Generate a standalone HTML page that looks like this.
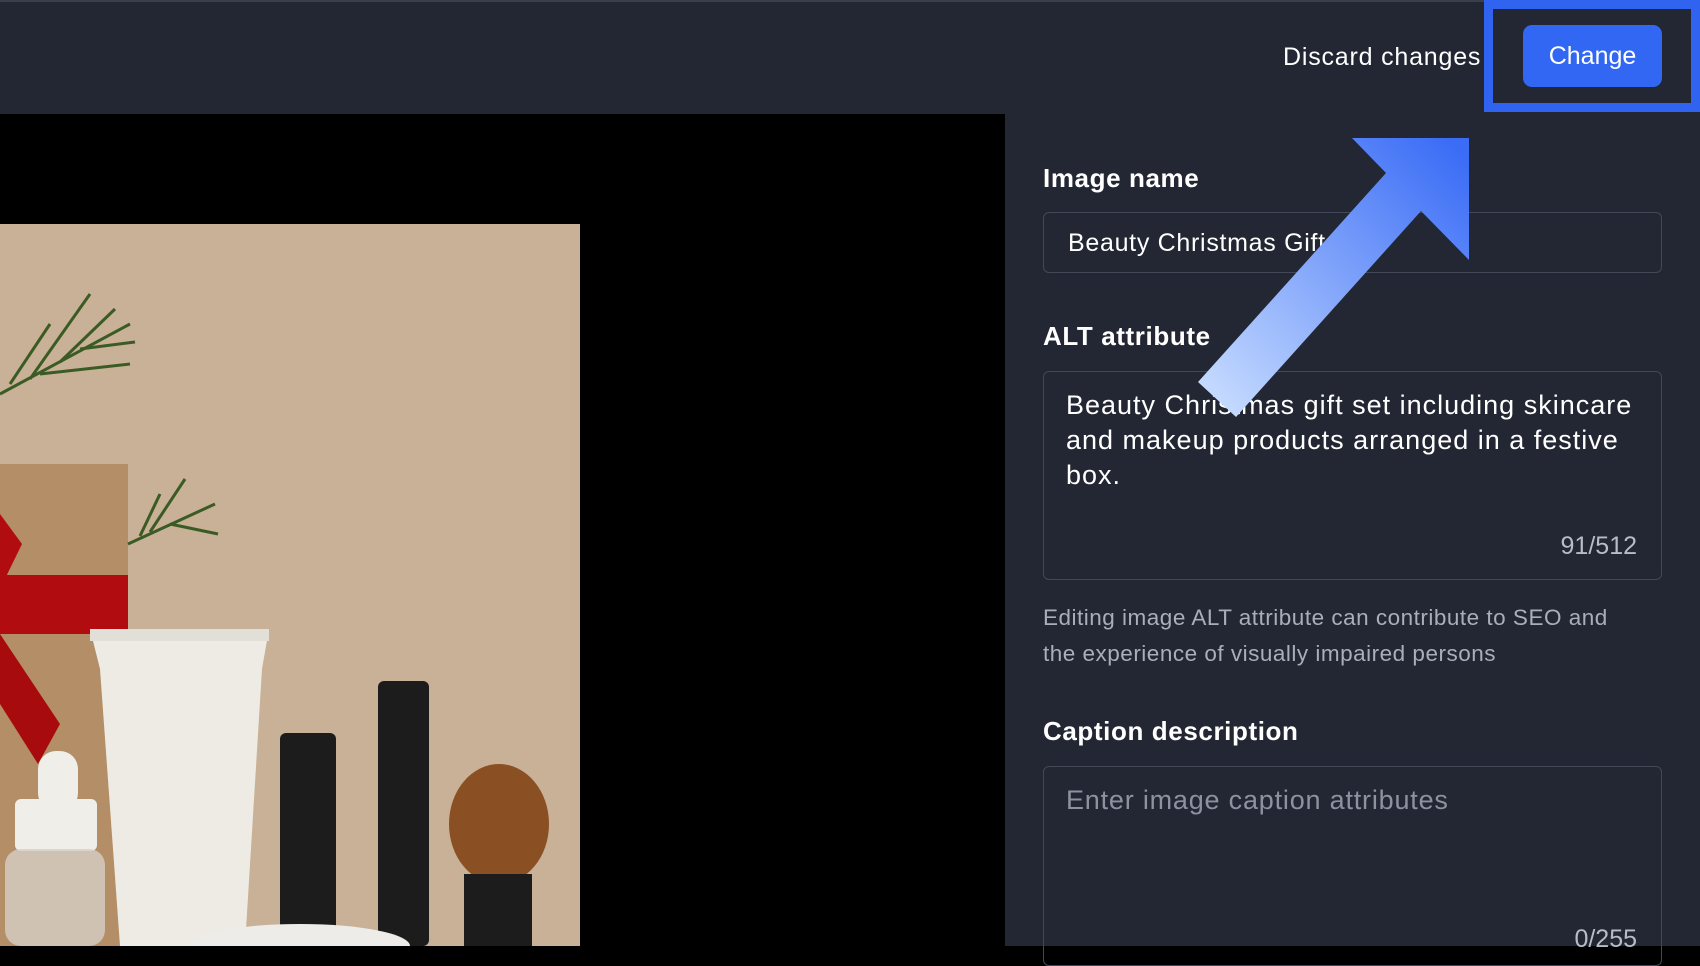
<!DOCTYPE html>
<html><head><meta charset="utf-8"><style>
*{margin:0;padding:0;box-sizing:border-box}
body{width:1700px;height:946px;overflow:hidden;background:#000;font-family:"Liberation Sans",sans-serif;position:relative}
.hdr{position:absolute;left:0;top:0;width:1700px;height:114px;background:#232733;border-top:2px solid #3a3f4c}
.abs{position:absolute}
.panel{position:absolute;left:1005px;top:114px;width:695px;height:832px;background:#232733}
.lbl{position:absolute;left:1043px;color:#fff;font-weight:bold;font-size:26px;letter-spacing:0.6px}
.box{position:absolute;left:1043px;width:619px;border:1px solid #424857;border-radius:6px}
</style></head><body>
<div class="hdr"></div>
<div class="abs" style="left:1283px;top:43px;color:#fff;font-size:25px;letter-spacing:0.8px">Discard changes</div>
<div class="abs" style="left:1484px;top:0;width:216px;height:112px;border:9px solid #2f63f0"></div>
<div class="abs" style="left:1523px;top:25px;width:139px;height:62px;background:#3167f3;border-radius:9px;color:#fff;font-size:25px;text-align:center;line-height:62px">Change</div>

<svg class="abs" style="left:0;top:224px" width="580" height="722" viewBox="0 0 580 722">
<rect width="580" height="722" fill="#c8b197"/>
<rect x="0" y="240" width="128" height="482" fill="#b48e66"/>
<rect x="0" y="351" width="128" height="59" fill="#b10d10"/>
<polygon points="0,290 22,320 0,365" fill="#b10d10"/>
<polygon points="0,410 60,500 38,540 0,480" fill="#a80b0d"/>
<g stroke="#3b5b25" stroke-width="3">
<line x1="0" y1="170" x2="130" y2="100"/><line x1="30" y1="155" x2="90" y2="70"/><line x1="60" y1="138" x2="115" y2="85"/><line x1="40" y1="150" x2="130" y2="140"/><line x1="80" y1="125" x2="135" y2="118"/><line x1="10" y1="160" x2="50" y2="100"/>
<line x1="128" y1="320" x2="215" y2="280"/><line x1="150" y1="308" x2="185" y2="255"/><line x1="170" y1="300" x2="218" y2="310"/><line x1="140" y1="312" x2="160" y2="270"/>
</g>
<polygon points="90,405 269,405 262,445 245,722 120,722 100,445" fill="#eeebe4"/>
<rect x="90" y="405" width="179" height="12" fill="#e2dfd8"/>
<rect x="280" y="509" width="56" height="213" rx="6" fill="#1c1c1c"/>
<rect x="378" y="457" width="51" height="265" rx="6" fill="#1c1c1c"/>
<ellipse cx="499" cy="600" rx="50" ry="60" fill="#8a4f22"/>
<rect x="464" y="650" width="68" height="72" fill="#1c1c1c"/>
<rect x="38" y="527" width="40" height="60" rx="18" fill="#f0eee9"/>
<rect x="15" y="575" width="82" height="52" rx="6" fill="#f0eee9"/>
<rect x="5" y="625" width="100" height="97" rx="16" fill="#d6d0c6" opacity=".8"/>
<ellipse cx="300" cy="722" rx="110" ry="22" fill="#eeece8"/>
</svg>

<div class="panel"></div>
<div class="lbl" style="top:163px">Image name</div>
<div class="box" style="top:212px;height:61px"></div>
<div class="abs" style="left:1068px;top:229px;color:#fff;font-size:25px;letter-spacing:0.7px">Beauty Christmas Gift</div>
<div class="lbl" style="top:321px">ALT attribute</div>
<div class="box" style="top:371px;height:209px"></div>
<div class="abs" style="left:1066px;top:388px;width:580px;color:#fff;font-size:27px;letter-spacing:1px;line-height:35px">Beauty Christmas gift set including skincare and makeup products arranged in a festive box.</div>
<div class="abs" style="left:1500px;top:532px;width:137px;text-align:right;color:#b7bcc6;font-size:25px">91/512</div>
<div class="abs" style="left:1043px;top:600px;width:600px;color:#a9aeb9;font-size:22.5px;letter-spacing:0.5px;line-height:36px">Editing image ALT attribute can contribute to SEO and the experience of visually impaired persons</div>
<div class="lbl" style="top:716px">Caption description</div>
<div class="box" style="top:766px;height:200px"></div>
<div class="abs" style="left:1066px;top:785px;color:#8c92a0;font-size:27px;letter-spacing:0.8px">Enter image caption attributes</div>
<div class="abs" style="left:1500px;top:925px;width:137px;text-align:right;color:#b7bcc6;font-size:25px">0/255</div>

<svg class="abs" style="left:0;top:0" width="1700" height="946">
<defs><linearGradient id="g" x1="1210" y1="400" x2="1460" y2="150" gradientUnits="userSpaceOnUse"><stop offset="0" stop-color="#c6dbff"/><stop offset="1" stop-color="#3a6cf6"/></linearGradient></defs>
<polygon points="1198,382 1386,173 1352,138 1469,138 1469,260 1421,211 1236,417" fill="url(#g)"/>
</svg>
</body></html>
